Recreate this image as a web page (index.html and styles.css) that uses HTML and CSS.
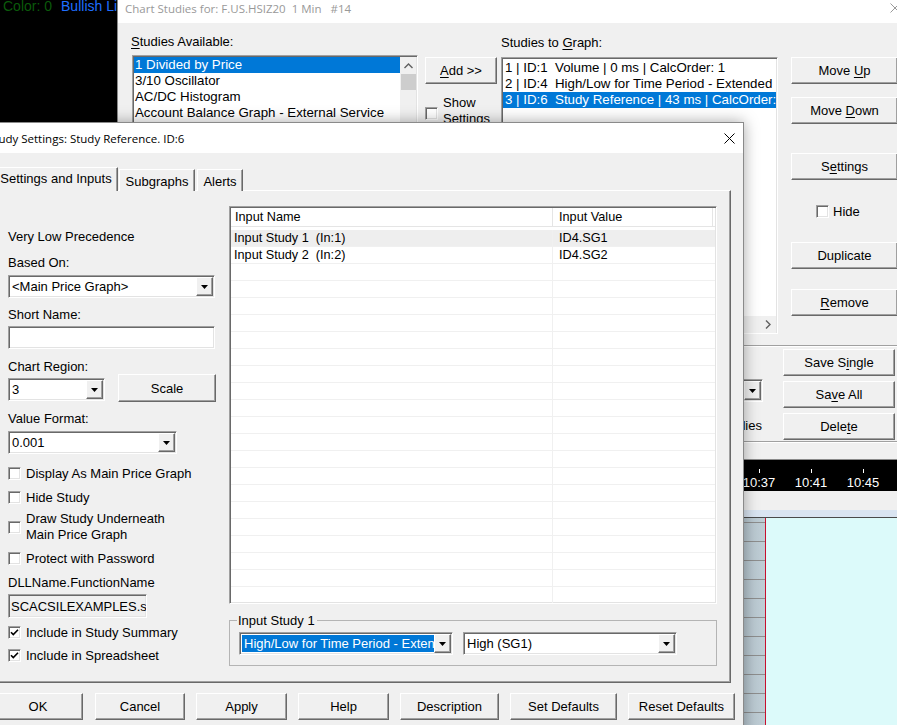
FILE: index.html
```html
<!DOCTYPE html>
<html lang="en">
<head>
  <meta charset="UTF-8">
  <title>Study Settings: Study Reference. ID:6</title>
  <link rel="stylesheet" href="styles.css">
</head>
<body>

<!-- chart window behind the dialogs -->
<div class="legend"><span class="leg-green">Color: 0</span><span class="leg-blue">Bullish Line</span></div>

<div class="chart-lower">
  <div class="axis">
    <div class="tick">10:37</div>
    <div class="tick">10:41</div>
    <div class="tick">10:45</div>
  </div>
  <div class="axis-gap"></div>
  <div class="region-strip"></div>
  <div class="region">
    <div class="scale-col"></div>
    <div class="plot"></div>
  </div>
</div>

<!-- Chart Studies dialog (inactive) -->
<div class="window parent">
  <div class="titlebar inactive">
    <span class="title">Chart Studies for: F.US.HSIZ20  1 Min   #14</span>
    <svg class="close" width="10" height="10" viewBox="0 0 10 10"><path d="M0.5 0.5 L9.5 9.5 M9.5 0.5 L0.5 9.5" stroke="#9a9a9a" stroke-width="1"/></svg>
  </div>
  <div class="parent-body">
    <div class="studies-row">
      <div class="col-avail">
        <div class="plbl"><u>S</u>tudies Available:</div>
        <div class="listbox avail">
          <div class="items">
            <div class="item sel">1 Divided by Price</div>
            <div class="item">3/10 Oscillator</div>
            <div class="item">AC/DC Histogram</div>
            <div class="item">Account Balance Graph - External Service</div>
            <div class="item">Accumulation/Distribution (Williams)</div>
            <div class="item">Accumulation/Distribution Flow</div>
          </div>
          <div class="vscroll">
            <div class="sb-arrow"><svg width="9" height="6" viewBox="0 0 9 6"><path d="M0.5 5 L4.5 1 L8.5 5" fill="none" stroke="#606060" stroke-width="1.4"/></svg></div>
            <div class="sb-thumb"></div>
          </div>
        </div>
      </div>

      <div class="col-add">
        <button class="btn add-btn"><u>A</u>dd &gt;&gt;</button>
        <div class="check show-row">
          <span class="cb"></span>
          <span class="show-text">Show<br>Settings</span>
        </div>
      </div>

      <div class="col-graph">
        <div class="plbl graph-lbl">Studies to <u>G</u>raph:</div>
        <div class="listbox graph">
          <div class="items">
            <div class="item">1 | ID:1&nbsp; Volume | 0 ms | CalcOrder: 1</div>
            <div class="item">2 | ID:4&nbsp; High/Low for Time Period - Extended | 12 ms</div>
            <div class="item sel">3 | ID:6&nbsp; Study Reference | 43 ms | CalcOrder: 3</div>
          </div>
          <div class="hscroll">
            <svg width="6" height="9" viewBox="0 0 6 9"><path d="M1 0.5 L5 4.5 L1 8.5" fill="none" stroke="#606060" stroke-width="1.4"/></svg>
          </div>
        </div>
      </div>

      <div class="col-actions">
        <button class="btn">Move <u>U</u>p</button>
        <button class="btn act-down">Move <u>D</u>own</button>
        <button class="btn act-settings">S<u>e</u>ttings</button>
        <div class="check hide-row"><span class="cb"></span>Hide</div>
        <button class="btn act-dup">Duplicate</button>
        <button class="btn act-remove"><u>R</u>emove</button>
      </div>
    </div>

    <div class="sep"></div>

    <div class="save-row">
      <div class="save-left">
        <div class="combo save-combo">
          <span class="combo-text">Default</span>
          <span class="combo-arrow"><svg width="7" height="4" viewBox="0 0 7 4"><path d="M0 0 H7 L3.5 4 Z" fill="#000"/></svg></span>
        </div>
        <div class="plbl save-lbl">Studies</div>
      </div>
      <div class="save-buttons">
        <button class="btn">Save S<u>i</u>ngle</button>
        <button class="btn">Sa<u>v</u>e All</button>
        <button class="btn">Dele<u>t</u>e</button>
      </div>
    </div>

    <div class="sep"></div>
  </div>
</div>

<!-- Study Settings dialog (active) -->
<div class="window front">
  <div class="titlebar">
    <span class="title">Study Settings: Study Reference. ID:6</span>
    <svg class="close" width="11" height="11" viewBox="0 0 11 11"><path d="M0.5 0.5 L10.5 10.5 M10.5 0.5 L0.5 10.5" stroke="#000" stroke-width="1"/></svg>
  </div>
  <div class="front-body">
    <div class="tabs">
      <div class="tab active">Settings and Inputs</div>
      <div class="tab tab-sub">Subgraphs</div>
      <div class="tab tab-alerts">Alerts</div>
    </div>

    <div class="panel">
      <div class="settings-col">
        <div class="lbl">Very Low Precedence</div>
        <div class="lbl s-based">Based On:</div>
        <div class="combo s-based-combo">
          <span class="combo-text">&lt;Main Price Graph&gt;</span>
          <span class="combo-arrow"><svg width="7" height="4" viewBox="0 0 7 4"><path d="M0 0 H7 L3.5 4 Z" fill="#000"/></svg></span>
        </div>
        <div class="lbl s-short">Short Name:</div>
        <div class="field s-short-field"></div>
        <div class="lbl s-region">Chart Region:</div>
        <div class="region-row">
          <div class="combo s-region-combo">
            <span class="combo-text">3</span>
            <span class="combo-arrow"><svg width="7" height="4" viewBox="0 0 7 4"><path d="M0 0 H7 L3.5 4 Z" fill="#000"/></svg></span>
          </div>
          <button class="btn scale-btn">Scale</button>
        </div>
        <div class="lbl s-format">Value Format:</div>
        <div class="combo s-format-combo">
          <span class="combo-text">0.001</span>
          <span class="combo-arrow"><svg width="7" height="4" viewBox="0 0 7 4"><path d="M0 0 H7 L3.5 4 Z" fill="#000"/></svg></span>
        </div>
        <div class="check c-display"><span class="cb"></span>Display As Main Price Graph</div>
        <div class="check c-hide"><span class="cb"></span>Hide Study</div>
        <div class="check c-draw"><span class="cb"></span><span class="two-line">Draw Study Underneath<br>Main Price Graph</span></div>
        <div class="check c-protect"><span class="cb"></span>Protect with Password</div>
        <div class="lbl s-dll">DLLName.FunctionName</div>
        <div class="field readonly s-dll-field">SCACSILEXAMPLES.scsf_StudyReference</div>
        <div class="check c-summary"><span class="cb on"><svg width="9" height="9" viewBox="0 0 9 9"><path d="M1 4.2 L3.3 6.6 L8 1.8" fill="none" stroke="#000" stroke-width="1.6"/></svg></span>Include in Study Summary</div>
        <div class="check c-sheet"><span class="cb on"><svg width="9" height="9" viewBox="0 0 9 9"><path d="M1 4.2 L3.3 6.6 L8 1.8" fill="none" stroke="#000" stroke-width="1.6"/></svg></span>Include in Spreadsheet</div>
      </div>

      <div class="inputs-col">
        <div class="listview">
          <div class="lv-head">
            <div class="c1">Input Name</div>
            <div class="c2">Input Value</div>
            <div class="c3"></div>
          </div>
          <div class="lv-rows">
            <div class="lv-row hot"><div class="c1">Input Study 1 &nbsp;(In:1)</div><div class="c2">ID4.SG1</div></div>
            <div class="lv-row"><div class="c1">Input Study 2 &nbsp;(In:2)</div><div class="c2">ID4.SG2</div></div>
            <div class="lv-row"><div class="c1"></div><div class="c2"></div></div>
            <div class="lv-row"><div class="c1"></div><div class="c2"></div></div>
            <div class="lv-row"><div class="c1"></div><div class="c2"></div></div>
            <div class="lv-row"><div class="c1"></div><div class="c2"></div></div>
            <div class="lv-row"><div class="c1"></div><div class="c2"></div></div>
            <div class="lv-row"><div class="c1"></div><div class="c2"></div></div>
            <div class="lv-row"><div class="c1"></div><div class="c2"></div></div>
            <div class="lv-row"><div class="c1"></div><div class="c2"></div></div>
            <div class="lv-row"><div class="c1"></div><div class="c2"></div></div>
            <div class="lv-row"><div class="c1"></div><div class="c2"></div></div>
            <div class="lv-row"><div class="c1"></div><div class="c2"></div></div>
            <div class="lv-row"><div class="c1"></div><div class="c2"></div></div>
            <div class="lv-row"><div class="c1"></div><div class="c2"></div></div>
            <div class="lv-row"><div class="c1"></div><div class="c2"></div></div>
            <div class="lv-row"><div class="c1"></div><div class="c2"></div></div>
            <div class="lv-row"><div class="c1"></div><div class="c2"></div></div>
            <div class="lv-row"><div class="c1"></div><div class="c2"></div></div>
            <div class="lv-row"><div class="c1"></div><div class="c2"></div></div>
            <div class="lv-row"><div class="c1"></div><div class="c2"></div></div>
            <div class="lv-row"><div class="c1"></div><div class="c2"></div></div>
          </div>
        </div>

        <fieldset class="group">
          <legend>Input Study 1</legend>
          <div class="group-row">
            <div class="combo g-study">
              <span class="combo-text"><span class="hilite">High/Low for Time Period - Extended</span></span>
              <span class="combo-arrow"><svg width="7" height="4" viewBox="0 0 7 4"><path d="M0 0 H7 L3.5 4 Z" fill="#000"/></svg></span>
            </div>
            <div class="combo g-sub">
              <span class="combo-text">High (SG1)</span>
              <span class="combo-arrow"><svg width="7" height="4" viewBox="0 0 7 4"><path d="M0 0 H7 L3.5 4 Z" fill="#000"/></svg></span>
            </div>
          </div>
        </fieldset>
      </div>
    </div>

    <div class="dialog-buttons">
      <button class="btn b-ok">OK</button>
      <button class="btn b-cancel">Cancel</button>
      <button class="btn b-apply">Apply</button>
      <button class="btn b-help">Help</button>
      <button class="btn b-desc">Description</button>
      <button class="btn b-set">Set Defaults</button>
      <button class="btn b-reset">Reset Defaults</button>
    </div>
  </div>
</div>

</body>
</html>
```

FILE: styles.css
```css
* {
  box-sizing: border-box;
}
html, body {
  margin: 0;
}
body {
  position: relative;
  width: 897px;
  height: 725px;
  overflow: hidden;
  background: #000;
  font-family: "Liberation Sans", Arial, sans-serif;
  font-size: 13px;
  color: #000;
}
u {
  text-decoration-thickness: 1px;
  text-underline-offset: 2px;
}

/* chart behind */
.legend {
  position: absolute;
  left: 3px;
  top: -2px;
  font-size: 14px;
  line-height: 16px;
  white-space: nowrap;
}
.leg-green {
  color: #0b5a0b;
  margin-right: 9px;
}
.leg-blue {
  color: #1f6fff;
}
.chart-lower {
  position: absolute;
  left: 700px;
  top: 459px;
  right: 0;
  bottom: 0;
  display: flex;
  flex-direction: column;
}
.axis {
  height: 32px;
  background: #000;
  display: flex;
  padding-left: 33px;
}
.tick {
  position: relative;
  width: 52px;
  text-align: center;
  color: #fff;
  padding-top: 16px;
  line-height: 15px;
  font-size: 13px;
}
.tick::before {
  content: "";
  position: absolute;
  left: 26px;
  top: 10px;
  width: 1px;
  height: 4px;
  background: #fff;
}
.axis-gap {
  height: 19px;
  background: #f0f0f0;
}
.region-strip {
  height: 8px;
  background: #d9e4f1;
  border-bottom: 1px solid #4a4a4a;
}
.region {
  flex: 1;
  display: flex;
}
.scale-col {
  width: 66px;
  border-right: 1px solid #c8102e;
  background:
    repeating-linear-gradient(to bottom, transparent 0 4px, #8e8e8e 4px 5px, transparent 5px 19px),
    linear-gradient(to right, #a6b7c1, #bfcdd5);
}
.plot {
  flex: 1;
  background: #dcfafa;
}

/* windows */
.window {
  position: absolute;
  background: #f0f0f0;
  border: 1px solid #8a8a8a;
}
.titlebar {
  height: 30px;
  background: #fff;
  display: flex;
  align-items: center;
  justify-content: space-between;
  font-family: "Open Sans", "Liberation Sans", sans-serif;
  font-size: 11px;
  white-space: pre;
}
.titlebar.inactive {
  color: #999;
}

/* Chart Studies dialog */
.parent {
  left: 117px;
  top: -8px;
  width: 800px;
  height: 468px;
}
.parent .titlebar {
  padding-left: 7px;
  padding-right: 15px;
  font-size: 11.5px;
}
.parent .close {
  margin-right: 1px;
}
.parent-body {
  font-size: 13px;
}
.plbl {
  line-height: 16px;
  height: 16px;
  white-space: nowrap;
}
.studies-row {
  display: flex;
  height: 322px;
  padding-left: 13px;
}
.col-avail {
  width: 287px;
  padding-top: 11px;
}
.listbox {
  background: #fff;
  border: 1px solid;
  border-color: #a0a0a0 #fff #fff #a0a0a0;
  box-shadow: inset 1px 1px #696969, inset -1px -1px #e3e3e3;
}
.listbox .item {
  height: 16px;
  line-height: 16px;
  white-space: nowrap;
  overflow: hidden;
  font-size: 13.3px;
}
.listbox .item.sel {
  background: #0078d7;
  color: #fff;
}
.avail {
  margin-top: 5px;
  margin-left: 1px;
  width: 286px;
  height: 150px;
  padding: 1px;
  display: flex;
}
.avail .items {
  flex: 1;
  overflow: hidden;
}
.avail .item {
  padding-left: 1px;
}
.vscroll {
  width: 16px;
  background: #f0f0f0;
}
.sb-arrow {
  height: 17px;
  display: flex;
  align-items: center;
  justify-content: center;
}
.sb-thumb {
  height: 16px;
  margin-left: 1px;
  background: #cdcdcd;
}
.col-add {
  width: 72px;
  margin-left: 7px;
  padding-top: 34px;
}
.add-btn {
  width: 72px;
}
.check {
  display: flex;
  align-items: center;
  white-space: nowrap;
  line-height: 15px;
}
.cb {
  width: 13px;
  height: 13px;
  flex: none;
  margin-right: 5px;
  background: #fff;
  border: 1px solid;
  border-color: #a0a0a0 #fff #fff #a0a0a0;
  box-shadow: inset 1px 1px #696969, inset -1px -1px #e3e3e3;
  display: flex;
  align-items: center;
  justify-content: center;
}
.show-row {
  margin-top: 11px;
  align-items: flex-start;
}
.show-row .cb {
  margin-top: 12px;
}
.show-text {
  line-height: 16px;
}
.col-graph {
  width: 277px;
  margin-left: 4px;
  padding-top: 12px;
}
.graph {
  margin-top: 6px;
  height: 277px;
  padding: 2px 1px 0 1px;
  display: flex;
  flex-direction: column;
}
.graph .items {
  flex: 1;
  overflow: hidden;
}
.graph .item {
  padding-left: 2px;
}
.hscroll {
  height: 17px;
  background: #f0f0f0;
  display: flex;
  align-items: center;
  justify-content: flex-end;
  padding-right: 5px;
}
.col-actions {
  width: 107px;
  margin-left: 13px;
  padding-top: 34px;
  display: flex;
  flex-direction: column;
}
.col-actions .btn {
  width: 107px;
}
.col-actions .act-down {
  margin-top: 13px;
}
.col-actions .act-settings {
  margin-top: 29px;
}
.hide-row {
  margin-top: 23px;
  height: 16px;
  padding-left: 25px;
}
.hide-row .cb {
  margin-right: 4px;
}
.col-actions .act-dup {
  margin-top: 23px;
}
.col-actions .act-remove {
  margin-top: 20px;
}
.sep {
  height: 2px;
  border-top: 1px solid #a0a0a0;
  border-bottom: 1px solid #fff;
}
.save-row {
  display: flex;
  height: 94px;
  padding-left: 13px;
  padding-top: 2px;
}
.save-left {
  width: 632px;
  margin-right: 20px;
  display: flex;
  flex-direction: column;
  align-items: flex-end;
}
.save-combo {
  width: 200px;
  height: 22px;
  margin-top: 30px;
}
.save-lbl {
  margin-top: 16px;
  margin-right: 1px;
}
.save-buttons {
  width: 112px;
  display: flex;
  flex-direction: column;
  gap: 5px;
}

/* controls */
.btn {
  display: block;
  height: 27px;
  line-height: 24px;
  text-align: center;
  margin: 0;
  padding: 0;
  background: #f0f0f0;
  border: 1px solid;
  border-color: #fff #696969 #696969 #fff;
  box-shadow: inset -1px -1px #a0a0a0;
  font: inherit;
  color: #000;
  white-space: nowrap;
}
.combo, .field {
  display: flex;
  align-items: center;
  height: 23px;
  background: #fff;
  border: 1px solid;
  border-color: #a0a0a0 #fff #fff #a0a0a0;
  box-shadow: inset 1px 1px #696969, inset -1px -1px #e3e3e3;
  padding: 1px;
  overflow: hidden;
  white-space: nowrap;
}
.combo-text {
  flex: 1;
  overflow: hidden;
  padding-left: 2px;
}
.combo-arrow {
  width: 17px;
  height: 19px;
  flex: none;
  display: flex;
  align-items: center;
  justify-content: center;
  background: #f0f0f0;
  border: 1px solid;
  border-color: #fff #696969 #696969 #fff;
  box-shadow: inset -1px -1px #a0a0a0;
}
.field {
  padding-left: 2px;
}
.field.readonly {
  background: #f0f0f0;
}

/* Study Settings dialog */
.front {
  left: -20px;
  top: 122px;
  width: 764px;
  height: 620px;
  box-shadow: 0 0 14px rgba(0, 0, 0, 0.35);
}
.front .titlebar {
  padding-left: 7px;
  padding-right: 8px;
  font-size: 11.5px;
}
.front-body {
  padding-top: 14px;
}
.tabs {
  display: flex;
  align-items: flex-end;
  height: 24px;
  margin-left: 13px;
}
.tab {
  position: relative;
  height: 22px;
  display: flex;
  align-items: center;
  justify-content: center;
  padding-top: 1px;
  background: #f0f0f0;
  border: 1px solid;
  border-bottom: none;
  border-color: #fff #696969 #fff #fff;
  box-shadow: inset -1px 0 #a0a0a0;
}
.tab.active {
  z-index: 1;
  width: 124px;
  height: 24px;
  padding-top: 0;
  padding-bottom: 2px;
}
.tab-sub {
  width: 76px;
  margin-left: 1px;
}
.tab-alerts {
  width: 46px;
  margin-left: 2px;
}
.panel {
  margin-top: -1px;
  margin-left: 13px;
  width: 737px;
  height: 493px;
  border: 1px solid;
  border-color: #fff #696969 #696969 #fff;
  box-shadow: inset -1px -1px #a0a0a0;
  padding: 15px 0 0 13px;
  display: grid;
  grid-template-columns: 208px 489px;
  column-gap: 13px;
  align-items: start;
}
.settings-col {
  margin-top: 23px;
  display: flex;
  flex-direction: column;
  align-items: flex-start;
}
.lbl {
  line-height: 15px;
  height: 15px;
  white-space: nowrap;
}
.s-based { margin-top: 11px; }
.s-based-combo { margin-top: 5px; width: 207px; }
.s-short { margin-top: 9px; }
.s-short-field { margin-top: 4px; width: 207px; }
.s-region { margin-top: 10px; }
.region-row {
  display: flex;
  align-items: flex-start;
  height: 28px;
}
.s-region-combo { margin-top: 4px; width: 97px; }
.region-row .scale-btn {
  width: 98px;
  height: 28px;
  line-height: 25px;
  margin-left: 13px;
}
.s-format { margin-top: 9px; }
.s-format-combo { margin-top: 5px; width: 169px; }
.c-display { margin-top: 12px; }
.c-hide { margin-top: 9px; }
.c-draw { margin-top: 6px; }
.two-line { line-height: 16px; }
.c-protect { margin-top: 8px; }
.s-dll { margin-top: 9px; }
.s-dll-field { margin-top: 4px; width: 139px; height: 24px; }
.c-summary { margin-top: 7px; }
.c-sheet { margin-top: 8px; }

.listview {
  width: 488px;
  height: 398px;
  background: #fff;
  border: 1px solid;
  border-color: #a0a0a0 #fff #fff #a0a0a0;
  box-shadow: inset 1px 1px #696969, inset -1px -1px #e3e3e3;
  padding: 1px;
  overflow: hidden;
  font-size: 12.7px;
}
.lv-head {
  display: flex;
  height: 19px;
  border-bottom: 1px solid #e5e5e5;
}
.lv-head > div {
  line-height: 18px;
  border-right: 1px solid #e5e5e5;
}
.lv-head .c1, .lv-row .c1 {
  width: 322px;
  padding-left: 4px;
}
.lv-head .c2, .lv-row .c2 {
  width: 160px;
  padding-left: 6px;
}
.lv-head .c3 {
  flex: 1;
  border-right: none;
}
.lv-rows {
  padding-top: 3px;
}
.lv-row {
  display: flex;
  height: 17px;
  line-height: 16px;
  border-bottom: 1px solid #f0f0f0;
  white-space: nowrap;
}
.lv-row .c1 {
  padding-left: 3px;
  border-right: 1px solid #f0f0f0;
}
.lv-row.hot {
  background: #eeeeee;
}
.group {
  margin: 9px 0 0 0;
  width: 488px;
  padding: 4px 0 10px 7px;
  border: 1px solid #b4b4b4;
}
.group legend {
  padding: 0 2px 0 1px;
  line-height: 15px;
}
.group-row {
  display: flex;
  gap: 10px;
  padding-left: 2px;
}
.g-study, .g-sub {
  width: 214px;
}
.g-study .combo-text {
  padding-left: 1px;
}
.hilite {
  display: inline-block;
  background: #0078d7;
  color: #fff;
  line-height: 17px;
  padding: 0 2px;
  min-width: 100%;
}
.dialog-buttons {
  display: flex;
  margin-top: 10px;
  margin-left: 12px;
}
.dialog-buttons .btn {
  width: 90px;
  margin-left: 11px;
}
.dialog-buttons .b-ok { margin-left: 0; }
.dialog-buttons .b-cancel { margin-left: 12px; }
.dialog-buttons .b-apply,
.dialog-buttons .b-help { width: 91px; }
.dialog-buttons .b-desc { width: 99px; }
.dialog-buttons .b-set,
.dialog-buttons .b-reset { width: 107px; }
```
